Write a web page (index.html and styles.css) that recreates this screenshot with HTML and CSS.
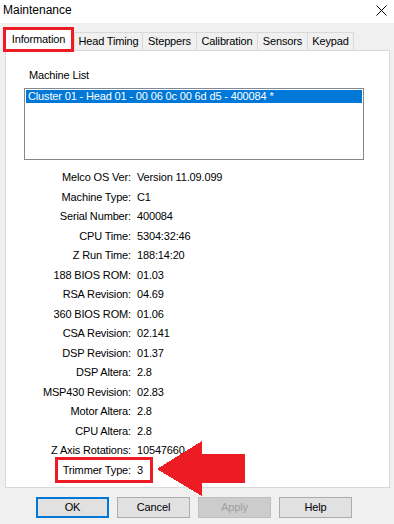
FILE: index.html
```html
<!DOCTYPE html>
<html>
<head>
<meta charset="utf-8">
<title>Maintenance</title>
<link rel="stylesheet" href="styles.css">
</head>
<body>
<div class="window">
  <div class="titlebar">
    <span class="title">Maintenance</span>
    <svg class="close" width="11" height="11" viewBox="0 0 11 11"><path d="M0.5 0.5L10.5 10.5M10.5 0.5L0.5 10.5" stroke="#000" stroke-width="1"/></svg>
  </div>
  <div class="tabs">
    <div class="tab active">Information</div>
    <div class="tab t-head">Head Timing</div>
    <div class="tab t-step">Steppers</div>
    <div class="tab t-cal">Calibration</div>
    <div class="tab t-sens">Sensors</div>
    <div class="tab t-key">Keypad</div>
  </div>
  <div class="panel">
    <div class="list-label">Machine List</div>
    <div class="listbox">
      <div class="list-item selected">Cluster 01 - Head 01 - 00 06 0c 00 6d d5 - 400084 *</div>
    </div>
    <div class="info">
      <div class="row"><span class="lbl">Melco OS Ver:</span><span class="val">Version 11.09.099</span></div>
      <div class="row"><span class="lbl">Machine Type:</span><span class="val">C1</span></div>
      <div class="row"><span class="lbl">Serial Number:</span><span class="val">400084</span></div>
      <div class="row"><span class="lbl">CPU Time:</span><span class="val">5304:32:46</span></div>
      <div class="row"><span class="lbl">Z Run Time:</span><span class="val">188:14:20</span></div>
      <div class="row"><span class="lbl">188 BIOS ROM:</span><span class="val">01.03</span></div>
      <div class="row"><span class="lbl">RSA Revision:</span><span class="val">04.69</span></div>
      <div class="row"><span class="lbl">360 BIOS ROM:</span><span class="val">01.06</span></div>
      <div class="row"><span class="lbl">CSA Revision:</span><span class="val">02.141</span></div>
      <div class="row"><span class="lbl">DSP Revision:</span><span class="val">01.37</span></div>
      <div class="row"><span class="lbl">DSP Altera:</span><span class="val">2.8</span></div>
      <div class="row"><span class="lbl">MSP430 Revision:</span><span class="val">02.83</span></div>
      <div class="row"><span class="lbl">Motor Altera:</span><span class="val">2.8</span></div>
      <div class="row"><span class="lbl">CPU Altera:</span><span class="val">2.8</span></div>
      <div class="row"><span class="lbl">Z Axis Rotations:</span><span class="val">10547660</span></div>
      <div class="row marked"><span class="mark"></span><span class="lbl">Trimmer Type:</span><span class="val">3</span></div>
    </div>
  </div>
  <div class="buttons">
    <div class="btn default">OK</div>
    <div class="btn">Cancel</div>
    <div class="btn disabled">Apply</div>
    <div class="btn">Help</div>
  </div>
  <svg class="arrow" width="394" height="524" viewBox="0 0 394 524">
    <polygon points="157,469 202,441 202,454 245,454 245,483 202,483 202,496" fill="#ed1c24" shape-rendering="crispEdges"/>
  </svg>
</div>
</body>
</html>
```
FILE: styles.css
```css
* { box-sizing: border-box; }
html, body { margin: 0; padding: 0; }
body {
  font-family: "Liberation Sans", Arial, sans-serif;
  font-size: 11px;
  color: #000;
  background: #f0f0f0;
}
.window {
  position: relative;
  width: 394px;
  height: 524px;
  background: #f0f0f0;
  overflow: hidden;
}
.titlebar {
  height: 23px;
  background: #fff;
  display: flex;
  justify-content: space-between;
  align-items: flex-start;
  padding: 0 7px 0 3px;
}
.title {
  font-size: 12px;
  line-height: 16px;
  margin-top: 2px;
}
.close { margin-top: 5px; }
.tabs {
  height: 27px;
  display: flex;
  align-items: flex-end;
  padding-left: 3px;
  letter-spacing: -0.15px;
}
.tab {
  height: 18px;
  line-height: 17px;
  text-align: center;
  border: 1px solid #d9d9d9;
  border-bottom: none;
  background: #f0f0f0;
  margin-left: -1px;
  white-space: nowrap;
}
.tab.active {
  position: relative;
  z-index: 2;
  width: 71px;
  height: 25px;
  line-height: 19px;
  margin-left: 0;
  margin-bottom: -2px;
  border: 3px solid #ed1c24;
  background: #fff;
}
.t-head { width: 69px; margin-left: 0; }
.t-step { width: 55px; }
.t-cal { width: 62px; }
.t-sens { width: 51px; }
.t-key { width: 47px; }
.panel {
  margin-left: 5px;
  width: 385px;
  height: 438px;
  border: 1px solid #d9d9d9;
  background: #fff;
  letter-spacing: -0.15px;
}
.list-label {
  margin: 17px 0 0 23px;
  line-height: 14px;
}
.listbox {
  margin: 6px 0 0 18px;
  width: 340px;
  height: 72px;
  border: 1px solid #828790;
  padding: 1px;
  background: #fff;
}
.list-item {
  height: 13px;
  line-height: 13px;
  padding-left: 2px;
  white-space: nowrap;
}
.list-item.selected {
  background: #0078d7;
  color: #fff;
}
.info { margin-top: 8px; }
.row {
  display: flex;
  height: 19.5px;
  line-height: 19.5px;
  white-space: nowrap;
}
.lbl {
  width: 125px;
  text-align: right;
}
.val { margin-left: 6px; }
.row.marked { position: relative; }
.mark {
  position: absolute;
  left: 49px;
  top: -3.5px;
  width: 98px;
  height: 26px;
  border: 3px solid #ed1c24;
}
.buttons {
  display: flex;
  gap: 8px;
  padding-left: 36px;
  margin-top: 9px;
}
.btn {
  width: 73px;
  height: 21px;
  line-height: 19px;
  text-align: center;
  border: 1px solid #adadad;
  background: #e1e1e1;
  letter-spacing: -0.15px;
}
.btn.default {
  border: 2px solid #0078d7;
  line-height: 17px;
}
.btn.disabled {
  background: #cccccc;
  border-color: #bfbfbf;
  color: #a0a0a0;
}
.arrow {
  position: absolute;
  left: 0;
  top: 0;
  pointer-events: none;
}
```
